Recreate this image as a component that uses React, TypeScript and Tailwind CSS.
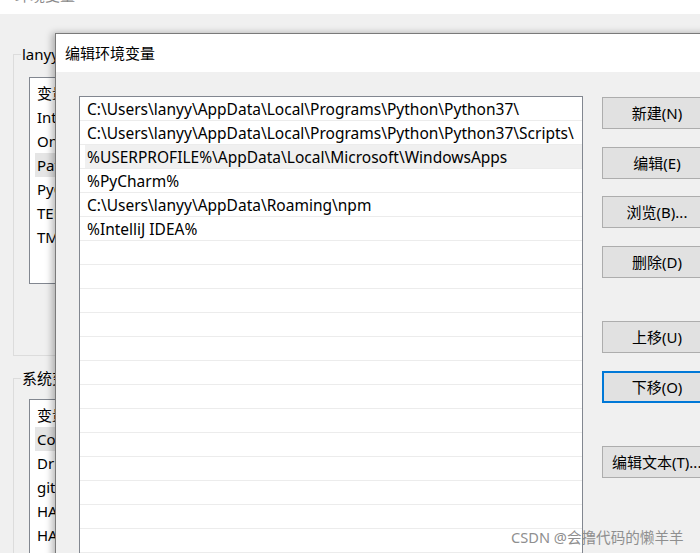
import React from "react";

const FONT = '"Segoe UI", "Noto Sans", "Noto Sans CJK SC", sans-serif';

const bgUser = ["变量", "IntelliJ IDEA", "OneDrive", "Path", "PyCharm", "TEMP", "TMP"];
const bgSys = ["变量", "ComSpec", "DriverData", "git", "HADOOP_HOME", "HAXE_PATH"];

const paths = [
  "C:\\Users\\lanyy\\AppData\\Local\\Programs\\Python\\Python37\\",
  "C:\\Users\\lanyy\\AppData\\Local\\Programs\\Python\\Python37\\Scripts\\",
  "%USERPROFILE%\\AppData\\Local\\Microsoft\\WindowsApps",
  "%PyCharm%",
  "C:\\Users\\lanyy\\AppData\\Roaming\\npm",
  "%IntelliJ IDEA%",
];

function BgList({ items, selected }: { items: string[]; selected: number }) {
  return (
    <div className="w-[60px] h-full bg-white border border-[#828790] pt-[3px] overflow-hidden">
      {items.map((t, i) => (
        <div
          key={i}
          className={
            "h-[24px] leading-[24px] pl-[2px] ml-[5px] whitespace-nowrap text-[15px] text-black " +
            (i === selected ? "bg-[#e5e5e5]" : "")
          }
        >
          {t}
        </div>
      ))}
    </div>
  );
}

function Btn({ label, focused, className }: { label: string; focused?: boolean; className?: string }) {
  return (
    <div
      className={
        "h-[32px] w-[110px] flex items-center justify-center whitespace-nowrap text-[15px] text-black bg-[#e1e1e1] " +
        (focused ? "border-2 border-[#0078d7] " : "border border-[#adadad] ") +
        (className ?? "")
      }
    >
      {label}
    </div>
  );
}

export default function App() {
  const rows = Array.from({ length: 19 }, (_, i) => paths[i] ?? "");
  return (
    <div
      className="relative w-[700px] h-[553px] overflow-hidden bg-[#f0f0f0]"
      style={{ fontFamily: FONT }}
    >
      {/* background window title (cut off) */}
      <div className="h-[14px] bg-white overflow-hidden">
        <div className="-mt-[15px] pl-[15px] text-[15px] leading-[20px] text-[#8a8a8a]">环境变量</div>
      </div>

      {/* background window body */}
      <div className="pl-[13px] pt-[30px] flex flex-col gap-[12px]">
        <fieldset className="w-[200px] h-[312px] border border-[#dcdcdc] px-[7px] flex flex-col">
          <legend className="px-[1px] text-[15px] leading-[20px] whitespace-nowrap">lanyy 的用户变量(U)</legend>
          <div className="mt-[13px] ml-[8px] h-[207px]">
            <BgList items={bgUser} selected={3} />
          </div>
        </fieldset>
        <fieldset className="w-[200px] h-[300px] border border-[#dcdcdc] px-[7px] flex flex-col">
          <legend className="px-[1px] text-[15px] leading-[20px] whitespace-nowrap">系统变量(S)</legend>
          <div className="mt-[11px] ml-[8px] h-[260px]">
            <BgList items={bgSys} selected={1} />
          </div>
        </fieldset>
      </div>

      {/* dialog window */}
      <div className="absolute left-[55px] top-[33px] w-[680px] h-[560px] border-l border-t border-[#7a7a7a] bg-[#f0f0f0] shadow-[-3px_0_7px_rgba(0,0,0,0.28)] flex flex-col">
        <div className="h-[38px] bg-white flex items-center pl-[9px] text-[15px] text-black">编辑环境变量</div>
        <div className="flex items-start pl-[23px]">
          <div className="pt-[24px]">
            <div className="w-[504px] h-[480px] bg-white border border-[#828790] overflow-hidden">
              {rows.map((t, i) => (
                <div key={i} className="h-[24px] pl-[1px] border-b border-[#ececec]">
                  <div
                    className={
                      "h-full pl-[2px] ml-[4px] pt-[1px] leading-[23px] text-[15.5px] text-black whitespace-nowrap " +
                      (i === 2 ? "bg-[#f0f0f0]" : "")
                    }
                  >
                    {t}
                  </div>
                </div>
              ))}
            </div>
          </div>
          <div className="ml-[19px] pt-[25px] flex flex-col">
            <Btn label="新建(N)" />
            <Btn label="编辑(E)" className="mt-[18px]" />
            <Btn label="浏览(B)..." className="mt-[17px]" />
            <Btn label="删除(D)" className="mt-[18px]" />
            <Btn label="上移(U)" className="mt-[43px]" />
            <Btn label="下移(O)" focused className="mt-[18px]" />
            <Btn label="编辑文本(T)..." className="mt-[43px] justify-start pl-[9px]" />
          </div>
        </div>
      </div>

      {/* watermark */}
      <div className="absolute left-[511px] top-[527px] text-[14.6px] leading-[20px] text-[#8f8f8f] whitespace-nowrap">
        CSDN @会撸代码的懒羊羊
      </div>
    </div>
  );
}
